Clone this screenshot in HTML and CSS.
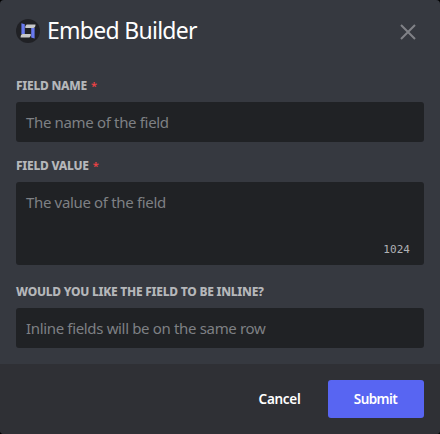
FILE: index.html
```html
<!DOCTYPE html>
<html lang="en">
<head>
<meta charset="utf-8">
<title>Embed Builder</title>
<link rel="stylesheet" href="styles.css">
</head>
<body>
<form class="modal">
  <header class="header">
    <svg class="logo" viewBox="0 0 24 24" aria-hidden="true">
      <circle cx="12" cy="12" r="12" fill="#202125"/>
      <path d="M5.4 4.3l3.4 1v9.8H5.4z" fill="#6879ee"/>
      <path d="M15.2 9h3.4v10.6l-3.4-1z" fill="#6879ee"/>
      <path d="M9.3 9V7.3l1.3-1.7h8.9c0 2.2-.8 3.4-2.2 3.4z" fill="#c8c8c8"/>
      <path d="M14.8 15v1.7l-1.3 1.7H4.6c0-2.2.8-3.4 2.2-3.4z" fill="#c8c8c8"/>
    </svg>
    <h1 class="title">Embed Builder</h1>
    <svg class="close" viewBox="0 0 16 16" aria-hidden="true"><path d="M1 1l14 14M15 1L1 15"/></svg>
  </header>
  <main class="body">
    <section class="field">
      <h2 class="label">Field name<span class="required">*</span></h2>
      <div class="input">The name of the field</div>
    </section>
    <section class="field">
      <h2 class="label">Field value<span class="required">*</span></h2>
      <div class="input area"><span>The value of the field</span><span class="count">1024</span></div>
    </section>
    <section class="field">
      <h2 class="label">Would you like the field to be inline?</h2>
      <div class="input">Inline fields will be on the same row</div>
    </section>
  </main>
  <footer class="footer">
    <button class="button cancel" type="button">Cancel</button>
    <button class="button submit" type="button">Submit</button>
  </footer>
</form>
</body>
</html>
```
FILE: styles.css
```css
* { box-sizing: border-box; }
body { margin: 0; background: #000; font-family: "Noto Sans", sans-serif; }
.modal { width: 440px; height: 434px; display: flex; flex-direction: column; background: #363940; border-radius: 4px; overflow: hidden; }
.header { height: 78px; padding: 16px 16px 0; display: flex; align-items: flex-start; }
.logo { width: 24px; height: 24px; margin-top: 3px; }
.title { margin: -1px 0 0 7px; font-size: 23px; font-weight: 400; line-height: 30px; letter-spacing: -0.72px; color: #fff; white-space: nowrap; }
.close { width: 16px; height: 16px; margin: 8px 8px 0 auto; fill: none; stroke: #808287; stroke-width: 2; }
.body { flex: 1; padding: 0 16px; }
.label { margin: 0 0 8px; height: 16px; display: flex; font-size: 12px; line-height: 16px; font-weight: 800; letter-spacing: -0.25px; text-transform: uppercase; color: #b5b7ba; white-space: nowrap; }
.required { color: #ed4245; margin-left: 4px; font-size: 11px; font-weight: 600; }
.input { height: 40px; padding: 10px; border-radius: 3px; background: #202225; color: #7e8084; font-size: 15px; line-height: 20px; letter-spacing: -0.34px; margin-bottom: 16px; white-space: nowrap; }
.area { height: 83px; display: flex; flex-direction: column; justify-content: space-between; margin-bottom: 19px; padding-bottom: 7px; }
.count { align-self: flex-end; margin-right: 4px; font: 11px/16px "DejaVu Sans Mono", monospace; letter-spacing: 0.05px; color: #b0b2b5; }
.footer { height: 70px; display: flex; align-items: center; justify-content: flex-end; padding: 0 16px; background: #2f3035; }
.button { height: 38px; border: 0; border-radius: 3px; padding: 0; color: #fff; font: 600 13.5px/16px "Noto Sans", sans-serif; }
.cancel { width: 97px; background: transparent; letter-spacing: -0.3px; }
.submit { width: 96px; padding-right: 1px; background: #5865f2; letter-spacing: -0.55px; }
```
